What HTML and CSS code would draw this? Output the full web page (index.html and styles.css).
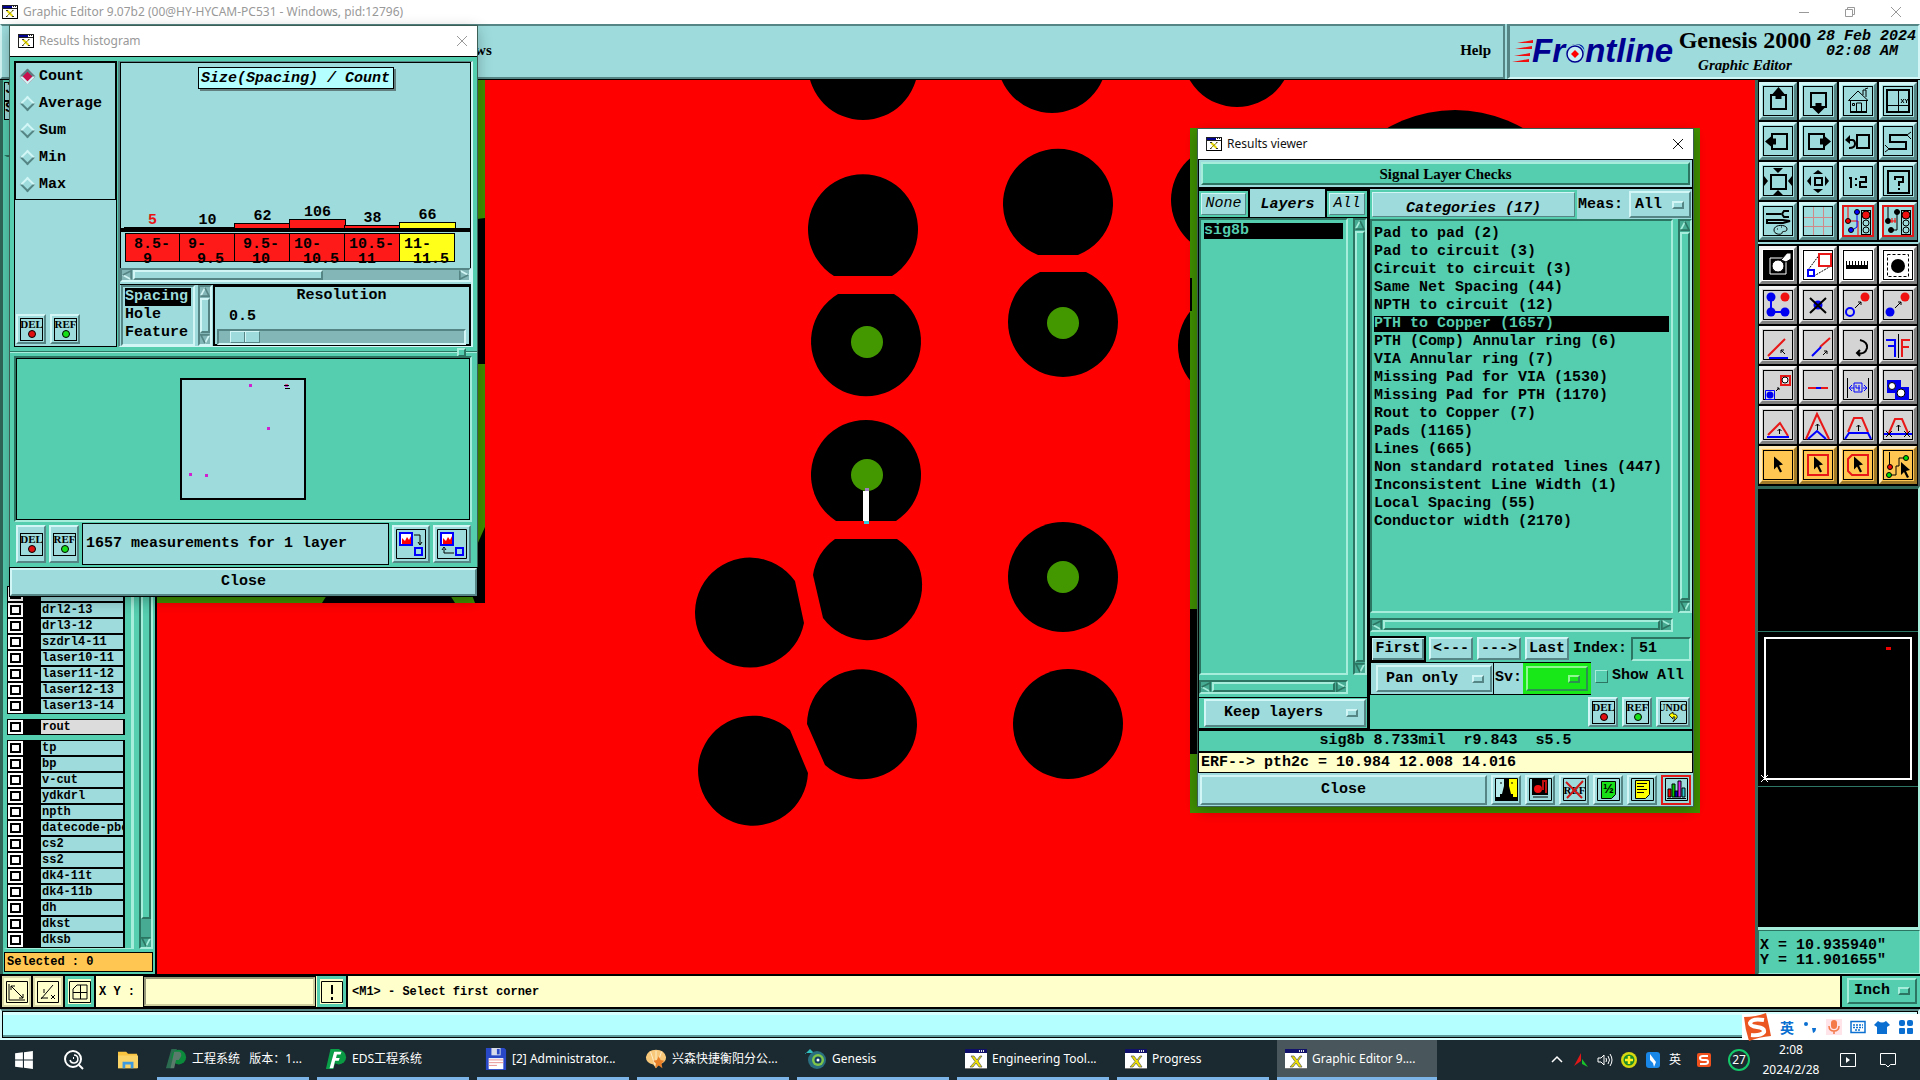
FILE: index.html
```html
<!DOCTYPE html>
<html lang="en">
<head>
<meta charset="utf-8">
<title>Graphic Editor 9.07b2</title>
<link rel="stylesheet" href="styles.css">
</head>
<body>
<svg class="defs" aria-hidden="true">
  <symbol id="xwin" viewBox="0 0 16 14"><rect x=".5" y=".5" width="15" height="13" fill="#fff" stroke="#222"/><path d="M1 1h9v2H1z" fill="#000090"/><path d="M11 1.5h1m1 0h1M1 3.500h14" stroke="#222"/><path d="M15.500 1v13M1 13.500h15" stroke="#000"/><path d="M5 5.500l5.500 5.500" stroke="#e6d800" stroke-width="2"/><path d="M4 5.500h2M10 11.500h2M4 11.500h1.500M10 5.500h1.500" stroke="#333"/><path d="M11 5.500L5 11" stroke="#8a8200"/></symbol>
  <symbol id="xtask" viewBox="0 0 22 22"><rect x="0" y="1" width="22" height="20" fill="#fff"/><path d="M0 1h22v4H0z" fill="#10106a"/><path d="M14 3h1m1 0h1m1 0h1" stroke="#ddd" stroke-width="2"/><path d="M6 8h3l3 4 3-4h2l-4 5 4 6h-3l-3-4-3 4H5l5-5.500z" fill="#f2e400" stroke="#555" stroke-width=".7"/><path d="M0 20.500h22" stroke="#777"/></symbol>
  <symbol id="del" viewBox="0 0 23 23"><rect x=".5" y=".5" width="22" height="22" fill="none" stroke="#000"/><text x="11.500" y="10" text-anchor="middle" font-family="Liberation Serif,serif" font-size="11">DEL</text><circle cx="12" cy="16" r="3.500" fill="#e01010" stroke="#000"/></symbol>
  <symbol id="ref" viewBox="0 0 23 23"><rect x=".5" y=".5" width="22" height="22" fill="none" stroke="#000"/><text x="11.500" y="10" text-anchor="middle" font-family="Liberation Serif,serif" font-size="11">REF</text><circle cx="12" cy="16" r="3.500" fill="#18e018" stroke="#000"/></symbol>
  <symbol id="arrow" viewBox="0 0 12 12"><path d="M6 1L1 10.500" stroke="var(--hi)" stroke-width="2"/><path d="M6 1L11 11H.5" fill="none" stroke="var(--lo)" stroke-width="2"/></symbol>
  <symbol id="cursor" viewBox="0 0 12 16"><path d="M1 0L10 8 6 9 9 15 7 16 4 10 1 13z"/></symbol>
</svg>

<div class="desktop">
  <header class="titlebar">
    <svg class="xicon"><use href="#xwin"/></svg>
    <span>Graphic Editor 9.07b2 (00@HY-HYCAM-PC531 - Windows, pid:12796)</span>
    <div class="winctl">
      <button aria-label="Minimize"><svg viewBox="0 0 12 12"><path d="M1 6.500h10"/></svg></button>
      <button aria-label="Restore"><svg viewBox="0 0 12 12"><path d="M1.500 3.500h7v7h-7zM3.500 3.500v-2h7v7h-2"/></svg></button>
      <button aria-label="Close"><svg viewBox="0 0 12 12"><path d="M1 1l10 10M11 1L1 11"/></svg></button>
    </div>
  </header>

  <div class="topbar aqua">
    <nav class="menubar"><a href="#w">Windows</a><a href="#h">Help</a></nav>
    <div class="brand">
      <svg class="logo" viewBox="0 0 162 28">
        <text x="20" y="24" font-family="Liberation Sans,sans-serif" font-size="33" font-weight="bold" font-style="italic" fill="#000090">Frontline</text>
        <circle cx="63" cy="16" r="10" fill="#9ddbdc"/><circle cx="63" cy="16" r="8" fill="#c8f0f4" stroke="#000090" stroke-width="1.500"/><path d="M63 12l4 4-4 4-4-4z" fill="#f00"/>
        <path d="M21 2v3H5zM20 8v3H3zM18 15v3H2zM17 21v3H0z" fill="#f01010"/>
      </svg>
      <div class="product"><b>Genesis 2000</b><i>Graphic Editor</i></div>
      <div class="date">28 Feb 2024<br>02:08 AM&nbsp;&nbsp;</div>
    </div>
  </div>

  <main class="work">
    <aside class="layers teal">
      <div class="jobs"><span>Job</span><span>Step</span></div>
      <div class="layerpane">
        <div class="layerlist">
          <div class="grp">
            <label><input type="checkbox"><span>laser4-5</span></label>
            <label><input type="checkbox"><span>drl2-13</span></label>
            <label><input type="checkbox"><span>drl3-12</span></label>
            <label><input type="checkbox"><span>szdrl4-11</span></label>
            <label><input type="checkbox"><span>laser10-11</span></label>
            <label><input type="checkbox"><span>laser11-12</span></label>
            <label><input type="checkbox"><span>laser12-13</span></label>
            <label><input type="checkbox"><span>laser13-14</span></label>
          </div>
          <div class="grp rout"><label><input type="checkbox"><span>rout</span></label></div>
          <div class="grp">
            <label><input type="checkbox"><span>tp</span></label>
            <label><input type="checkbox"><span>bp</span></label>
            <label><input type="checkbox"><span>v-cut</span></label>
            <label><input type="checkbox"><span>ydkdrl</span></label>
            <label><input type="checkbox"><span>npth</span></label>
            <label><input type="checkbox"><span>datecode-pbc</span></label>
            <label><input type="checkbox"><span>cs2</span></label>
            <label><input type="checkbox"><span>ss2</span></label>
            <label><input type="checkbox"><span>dk4-11t</span></label>
            <label><input type="checkbox"><span>dk4-11b</span></label>
            <label><input type="checkbox"><span>dh</span></label>
            <label><input type="checkbox"><span>dkst</span></label>
            <label><input type="checkbox"><span>dksb</span></label>
          </div>
        </div>
        <div class="vsb long"><svg><use href="#arrow"/></svg><i></i><svg class="down"><use href="#arrow"/></svg></div>
      </div>
      <div class="selected">Selected : 0</div>
    </aside>

    <section class="canvas" aria-label="Board view">
      <svg width="100%" height="100%">
        <g transform="translate(-157 -80)">
          <path d="M157 80H485V603H157z" fill="#3f8f00"/>
          <path d="M477 219l8-1V364h-8zM485 527V603H475l-3-8 5-50zM327 595H450l5 8H322z"/>
          <circle cx="863" cy="65" r="55"/><circle cx="1052" cy="58" r="55"/><circle cx="1237" cy="52" r="55"/><circle cx="1455" cy="247" r="137"/>
          <path d="M834 276A55 55 0 1 1 892 276z"/>
          <path d="M838 294A55 55 0 1 0 894 294z"/>
          <path d="M836 521A55 55 0 1 1 896 521z"/>
          <path d="M835 539A55 55 0 0 0 813 575L823 618A55 55 0 1 0 897 539z"/>
          <path d="M795 581A55 55 0 1 0 804 623z"/>
          <path d="M807 724L825 765A55 55 0 1 0 807 724z"/>
          <path d="M790 730A55 55 0 1 0 808 773z"/>
          <path d="M1038 255A55 55 0 1 1 1078 255z"/>
          <path d="M1040 272A55 55 0 1 0 1086 272z"/>
          <circle cx="1063" cy="577" r="55"/><circle cx="1068" cy="724" r="55"/><circle cx="1226" cy="200" r="55"/><circle cx="1233" cy="346" r="55"/>
          <g fill="#439800"><circle cx="867" cy="342" r="16"/><circle cx="867" cy="475" r="16"/><circle cx="1063" cy="323" r="16"/><circle cx="1063" cy="577" r="16"/></g>
          <path d="M863 491h6v30h-6z" fill="#fff"/><path d="M864 521h5v3h-5z" fill="#30d0e0"/><path d="M865 488h4v3h-4z" fill="#a080c0"/>
          <path d="M1190 128H1700V813H1190z" fill="#3f8f00"/><path d="M1190 609h8v145h-8zM1190 278h2v33h-2z"/>
        </g>
      </svg>
    </section>

    <aside class="tools">
      <div class="grid aqua">
        <button><svg viewBox="0 0 30 30"><rect x=".5" y=".5" width="29" height="29"/><path class="w2" d="M8 9h15v14H8z"/><path class="k" d="M15.500 1l6 7h-3v5h-6V8h-3z"/></svg></button>
        <button><svg viewBox="0 0 30 30"><rect x=".5" y=".5" width="29" height="29"/><path class="w2" d="M8 7h15v14H8z"/><path class="k" d="M15.500 28l6-6h-3v-5h-6v5h-3z"/></svg></button>
        <button><svg viewBox="0 0 30 30"><rect x=".5" y=".5" width="29" height="29"/><path d="M5.500 14.500L15 5l10 9.500zM7.500 14.500v12h16v-12M13.500 26v-9h5v9M20 9V4h3v7M22 3l3-1M9.500 17.500h2v2h-2z"/><path d="M7 26h17" class="w2"/></svg></button>
        <button><svg viewBox="0 0 30 30"><rect x=".5" y=".5" width="29" height="29"/><path class="w2" d="M4 4h22v22H4z"/><path d="M15.500 4v22M4 19.500h22M18 13l3 4m0-4l-3 4M22 13l1.500 2 1.500-2m-1.500 2v2"/></svg></button>
        <button><svg viewBox="0 0 30 30"><rect x=".5" y=".5" width="29" height="29"/><path class="w2" d="M9 8h15v15H9z"/><path class="k" d="M2 15.500l6-5v2h5v6H8v2z"/></svg></button>
        <button><svg viewBox="0 0 30 30"><rect x=".5" y=".5" width="29" height="29"/><path class="w2" d="M6 8h15v15H6z"/><path class="k" d="M28 15.500l-6-5v2h-5v6h5v2z"/></svg></button>
        <button><svg viewBox="0 0 30 30"><rect x=".5" y=".5" width="29" height="29"/><path class="w2" d="M14 9h12v13H14zM4 14h5q3 0 3 4t-6 4"/><path class="k" d="M2 14l5-5v9z"/></svg></button>
        <button><svg viewBox="0 0 30 30"><rect x=".5" y=".5" width="29" height="29"/><path class="w2" d="M24 9H7v7h16v7H6"/><path d="M24 9l4-3m-4 3l4 4M6 23l-4-4m4 4l-4 3"/></svg></button>
        <button><svg viewBox="0 0 30 30"><rect x=".5" y=".5" width="29" height="29"/><path class="w2" d="M8 9h15v14H8z"/><path class="k" d="M10 2h10l-5 5zM10 29h10l-5-5zM1 10v10l4-5zM29 10v10l-4-5z"/></svg></button>
        <button><svg viewBox="0 0 30 30"><rect x=".5" y=".5" width="29" height="29"/><path class="w2" d="M12 12h7v7h-7z"/><path class="k" d="M10 8h10l-5-4zM10 23h10l-5 4zM8 10v10l-4-5zM22 10v10l4-5z"/></svg></button>
        <button><svg viewBox="0 0 30 30"><rect x=".5" y=".5" width="29" height="29"/><path class="w2" d="M6 12h2v10M13 12v2m0 4v2M17 11h6v5h-6v5h7"/></svg></button>
        <button><svg viewBox="0 0 30 30"><rect x=".5" y=".5" width="29" height="29"/><path class="w2" d="M5 5h21v22H5zM12 14v-3h8v5h-4v4m0 2v2"/></svg></button>
        <button><svg viewBox="0 0 30 30"><rect x=".5" y=".5" width="29" height="29"/><path class="w2" d="M3 8h15m8-3h-5l-2 3 2 3h5M4 14h16l7 1-7 2H4z"/><path d="M11 24c0-6 13-6 13-1 0 4-5 1-5 4 0 2-8 2-8-3zM14 23h1m3-2h1"/></svg></button>
        <button><svg viewBox="0 0 30 30"><rect x=".5" y=".5" width="29" height="29"/><path d="M10.500 1v28M20.500 1v28M1 11.500h28M1 20.500h28" stroke="#d08888"/></svg></button>
        <button class="hot"><svg viewBox="0 0 30 30"><path d="M5 1v14h10v14" stroke="#f00"/><path d="M14 7v14l-6 4" stroke="#00f"/><circle cx="14" cy="6" r="2.500" fill="#00f"/><circle cx="8" cy="24" r="2.500" fill="#00f"/><circle cx="5" cy="15" r="2.500" fill="#e00"/><rect x="18.500" y="4.500" width="9" height="24"/><circle class="rd" cx="23" cy="9" r="4"/><circle cx="23" cy="17" r="3"/><circle cx="23" cy="24" r="3"/></svg></button>
        <button class="hot"><svg viewBox="0 0 30 30"><path d="M5 1v14M14 7v17H8"/><circle cx="14" cy="6" r="2.500" fill="#000"/><circle cx="8" cy="24" r="2.500" fill="#000"/><circle cx="5" cy="15" r="2.500" fill="#000"/><path d="M7 15h6m-4-3v5m3-5v5" stroke="#f00"/><rect x="18.500" y="4.500" width="9" height="24"/><circle class="rd" cx="23" cy="9" r="4"/><circle cx="23" cy="17" r="3"/><circle cx="23" cy="24" r="3"/></svg></button>
      </div>
      <div class="grid lower">
        <button class="wh"><svg viewBox="0 0 30 30"><path class="k" d="M0 0h30v30H0z"/><path d="M7 8h16v16H7z" stroke="#fff"/><circle cx="15" cy="16" r="6" fill="#fff"/><path d="M18 10L24 3h4v6l-5 3z" fill="#fff"/></svg></button>
        <button class="wh"><svg viewBox="0 0 30 30"><rect x=".5" y=".5" width="29" height="29"/><path d="M17 4L5 20M28 16L11 26" stroke-dasharray="2 1"/><path class="r" d="M16 4h12v12H16z"/><path class="b" d="M5 20h6v6H5z"/></svg></button>
        <button class="wh"><svg viewBox="0 0 30 30"><rect x=".5" y=".5" width="29" height="29"/><path class="k" d="M3 11h1v4h2v-4h1v4h2v-4h1v4h2v-4h1v4h2v-4h1v4h2v-4h1v4h2v-4h1v4h2v-4h1v8H3z"/></svg></button>
        <button class="wh"><svg viewBox="0 0 30 30"><rect x=".5" y=".5" width="29" height="29"/><path d="M4.500 4.500h21v22h-21z" stroke-dasharray="3 2"/><circle class="k" cx="15" cy="16" r="7"/></svg></button>

        <button><svg viewBox="0 0 30 30"><rect x=".5" y=".5" width="29" height="29"/><path class="b" d="M8 7v15h14"/><circle class="bf" cx="8" cy="7" r="4.500"/><circle class="bf" cx="8" cy="22" r="4.500"/><circle class="bf" cx="22" cy="22" r="4.500"/><circle class="rf" cx="22" cy="7" r="4.500"/></svg></button>
        <button><svg viewBox="0 0 30 30"><rect x=".5" y=".5" width="29" height="29"/><circle class="bf" cx="15" cy="15" r="4.500"/><path class="w2" d="M7 8l16 15M23 8L7 23"/></svg></button>
        <button><svg viewBox="0 0 30 30"><rect x=".5" y=".5" width="29" height="29"/><circle class="rf" cx="22" cy="7" r="4.500"/><circle class="b" cx="7" cy="22" r="4"/><path d="M12 18l6-6h-3m3 0v3"/></svg></button>
        <button><svg viewBox="0 0 30 30"><rect x=".5" y=".5" width="29" height="29"/><circle class="rf" cx="22" cy="7" r="4.500"/><circle class="bf" cx="7" cy="22" r="4.500"/><path d="M12 18l6-6h-3m3 0v3"/></svg></button>

        <button><svg viewBox="0 0 30 30"><rect x=".5" y=".5" width="29" height="29"/><path class="r" d="M5 26L22 9"/><path class="b" d="M6 28h19"/><path d="M22 24l-4-4h3m-3 0v3"/></svg></button>
        <button><svg viewBox="0 0 30 30"><rect x=".5" y=".5" width="29" height="29"/><path class="r" d="M17 17l10-9"/><path class="b" d="M9 26l9-9"/><path d="M20 25l4-4h-3m3 0v3"/></svg></button>
        <button><svg viewBox="0 0 30 30"><rect x=".5" y=".5" width="29" height="29"/><path class="w2" d="M17 10q8 2 7 8-2 7-9 5m2-3l-3 3 3 3"/></svg></button>
        <button><svg viewBox="0 0 30 30"><rect x=".5" y=".5" width="29" height="29"/><path class="b" d="M3 10h9v17M5 16h7"/><path class="r" d="M27 10h-8v17M19 17h7"/><path d="M15.500 4v24"/></svg></button>

        <button><svg viewBox="0 0 30 30"><rect x=".5" y=".5" width="29" height="29"/><path class="r" d="M18 6h9v9h-9z"/><circle cx="22" cy="10" r="3" fill="#fff"/><path d="M2.500 20.500h9v9h-9z" stroke="#00f"/><circle class="bf" cx="7" cy="25" r="3.500"/><path d="M13 21l3-3m-2 0h2v2"/></svg></button>
        <button><svg viewBox="0 0 30 30"><rect x=".5" y=".5" width="29" height="29"/><path class="r" d="M5 18h20"/><path class="b" d="M13 18h5"/></svg></button>
        <button><svg viewBox="0 0 30 30"><rect x=".5" y=".5" width="29" height="29"/><path d="M4.500 8v20M25.500 8v20"/><path d="M6 18h5m9 0h4M9 15l-3 3 3 3M21 15l3 3-3 3M11 13h8v9h-8zM13 15v3h4m-1-3v6" stroke="#00f"/></svg></button>
        <button><svg viewBox="0 0 30 30"><rect x=".5" y=".5" width="29" height="29"/><path class="bf" d="M4 10h14v7h8v13H12v-7H4z"/><circle cx="9" cy="16" r="3.500" fill="#fff"/><circle cx="18" cy="23" r="4" fill="#fff"/></svg></button>

        <button><svg viewBox="0 0 30 30"><rect x=".5" y=".5" width="29" height="29"/><path class="r" d="M5 25l12-12 8 13"/><path class="b" d="M4 27h22"/><path d="M16.500 24v-5m-2 2l2-2 2 2"/></svg></button>
        <button><svg viewBox="0 0 30 30"><rect x=".5" y=".5" width="29" height="29"/><path class="r" d="M3 29L14 4l12 25"/><path class="b" d="M5 29l9-8 9 8"/><path d="M14.500 20v-6m-2 2l2-2 2 2"/></svg></button>
        <button><svg viewBox="0 0 30 30"><rect x=".5" y=".5" width="29" height="29"/><path class="r" d="M5 22l6-14h8l6 14"/><path class="b" d="M2 29l4-6h19l3 6"/><path d="M15.500 21v-6m-2 2l2-2 2 2"/></svg></button>
        <button><svg viewBox="0 0 30 30"><rect x=".5" y=".5" width="29" height="29"/><path class="r" d="M6 23l6-14h7l6 14"/><path class="b" d="M1 24h28"/><path d="M15.500 21v-6m-2 2l2-2 2 2M3 21l6 6m0-6l-6 6M21 21l6 6m0-6l-6 6"/></svg></button>

        <button class="or"><svg viewBox="0 0 30 30"><rect x=".5" y=".5" width="29" height="29"/><use href="#cursor" x="10" y="6" width="12" height="17"/></svg></button>
        <button class="or"><svg viewBox="0 0 30 30"><rect x=".5" y=".5" width="29" height="29"/><path class="r" d="M5 5h20v20H5z"/><use href="#cursor" x="10" y="6" width="12" height="17"/></svg></button>
        <button class="or"><svg viewBox="0 0 30 30"><rect x=".5" y=".5" width="29" height="29"/><path class="r" d="M9 5h16v20H9l-4-4V9z"/><use href="#cursor" x="10" y="6" width="12" height="17"/></svg></button>
        <button class="or"><svg viewBox="0 0 30 30"><rect x=".5" y=".5" width="29" height="29"/><path d="M6.500 2v14M6 25h7v-9h3V8h7"/><circle cx="7" cy="17" r="2.500" fill="#e00"/><circle cx="6" cy="25" r="2.500" fill="#0d0"/><circle cx="23" cy="8" r="2.500" fill="#0d0"/><use href="#cursor" x="17" y="12" width="12" height="16"/></svg></button>
      </div>
      <div class="overview">
        <div></div>
        <div class="mid"><svg width="100%" height="100%"><rect x="7" y="6" width="146" height="141" fill="none" stroke="#fff" stroke-width="2"/><path d="M128 15h5v3h-5z" fill="#e00"/><path d="M3 143l7 7m0-7l-7 7" stroke="#fff"/></svg></div>
        <div></div>
      </div>
      <div class="coords">X = 10.935940"<br>Y = 11.901655"</div>
    </aside>
  </main>

  <div class="command">
    <button class="cb" aria-label="Zoom window"><svg viewBox="0 0 22 22"><path d="M.5.500h21v21H.5zM5 5l12 12M5 9V5h4m8 8v4h-4M3 3v16h16"/></svg></button>
    <button class="cb" aria-label="Angle"><svg viewBox="0 0 22 22"><path d="M.5.500h21v21H.5zM4 18L16 4M4 17h7m3-3l4 4m0-4l-4 4M7 8v4"/></svg></button>
    <button class="cb lit" aria-label="Grid"><svg viewBox="0 0 22 22"><path d="M.5.500h21v21H.5zM4 8l4-4h10v14H4zM11.500 4v14M4 11.500h14"/></svg></button>
    <label for="xy">X Y :</label>
    <input id="xy" type="text">
    <button class="cb lit" aria-label="Alert"><svg viewBox="0 0 22 22"><path d="M.5.500h21v21H.5z"/><path d="M11 4v9m0 3v3" stroke-width="2"/></svg></button>
    <p>&lt;M1&gt; - Select first corner</p>
    <div class="unit teal"><span class="sel"><select aria-label="Unit"><option>Inch</option></select></span></div>
  </div>
  <div class="strip"><div></div></div>

  <footer class="taskbar">
    <button class="tb" aria-label="Start"><svg viewBox="0 0 18 18"><path d="M1 3l7-1v6.500H1zM9 2l8-1v7.500H9zM1 9.500h7V16l-7-1zM9 9.500h8V17l-8-1z" fill="#fff"/></svg></button>
    <button class="tb" aria-label="Search"><svg viewBox="0 0 20 20" fill="none" stroke="#fff" stroke-width="2"><circle cx="9" cy="9" r="8"/><path d="M15 15l4 4"/><path d="M10 5a4 4 0 1 1-4 5" stroke-width="1.500"/><path d="M9 8h1" /></svg></button>
    <button class="tb files" aria-label="Files"><svg viewBox="0 0 22 20"><path d="M0 1h9l2 2h10v16H0z" fill="#f9c440"/><path d="M0 5h22v14H0z" fill="#fbd468"/><path d="M5 19v-7h12v7h-3v-4H8v4z" fill="#3f9be0"/></svg></button>
    <a class="app" href="#1"><svg viewBox="0 0 22 24"><path d="M6 1h6L6 22H0z" fill="#2b6b4f"/><circle cx="14" cy="10" r="8" fill="#0b8a3c"/><path d="M9 4h6q4 3-1 9h-3l-2 9H5z" fill="#5a7a6c"/></svg>工程系统&nbsp;&nbsp; 版本：1...</a>
    <a class="app" href="#2"><svg viewBox="0 0 22 24"><path d="M5 1h10L8 23H0z" fill="#0aa049"/><circle cx="14" cy="10" r="8" fill="#0b9a44"/><path d="M9 4h8l-1 3h-4l-1 4h4l-1 3h-4l-2 8H4z" fill="#fff"/></svg>EDS工程系统</a>
    <a class="app" href="#3"><svg viewBox="0 0 22 24"><path d="M0 0h20l2 2v22H0z" fill="#2848c8"/><path d="M6 0h10v8H6z" fill="#d8dcea"/><path d="M12 1h3v6h-3z" fill="#2848c8"/><path d="M3 11h16v12H3z" fill="#fff"/><path d="M3 13h16M3 16h16M3 19h9" stroke="#e68a8a"/></svg>[2] Administrator...</a>
    <a class="app" href="#4"><svg viewBox="0 0 24 22"><path d="M1 9Q3 1 12 1t11 8q0 6-8 8l-3 4-3-4Q1 15 1 9z" fill="#f8c87a"/><path d="M12 2v18M6 3l5 15M18 3l-5 15" stroke="#fff0cf"/><path d="M15 8l2 4 4 1-3 3 1 5-4-3-4 3 1-5-3-3 4-1z" fill="#e8802a"/></svg>兴森快捷衡阳分公...</a>
    <a class="app" href="#5"><svg viewBox="0 0 22 22"><path d="M0 6l5-5 4 4h-9z" fill="#30c0c0"/><circle cx="12" cy="12" r="9" fill="#2a6f7f"/><circle cx="13" cy="12" r="6" fill="#7fc54a"/><circle cx="13" cy="12" r="3.500" fill="#123c60"/><circle cx="13" cy="12" r="1.500" fill="#fff"/></svg>Genesis</a>
    <a class="app" href="#6"><svg><use href="#xtask"/></svg>Engineering Tool...</a>
    <a class="app" href="#7"><svg><use href="#xtask"/></svg>Progress</a>
    <a class="app active" href="#8"><svg><use href="#xtask"/></svg>Graphic Editor 9....</a>
    <div class="tray">
      <svg viewBox="0 0 16 16"><path d="M3 10l5-5 5 5" fill="none" stroke="#fff" stroke-width="1.500"/></svg>
      <svg viewBox="0 0 16 16"><path d="M8 1v8l-7 5z" fill="#e01818"/><path d="M9 7l6 8-6-3z" fill="#19c22a"/></svg>
      <svg viewBox="0 0 16 16" fill="none" stroke="#fff"><path d="M1 6h3l3-3v10l-3-3H1zM9 6q1 2 0 4M11 4q3 4 0 8M13 2q4 6 0 12"/></svg>
      <svg viewBox="0 0 16 16"><circle cx="8" cy="8" r="8" fill="#d8d810"/><circle cx="8" cy="8" r="5.500" fill="#1d8c28"/><path d="M8 4v8M4 8h8" stroke="#fff020" stroke-width="2.500"/></svg>
      <svg viewBox="0 0 16 16"><rect x="1" width="14" height="16" rx="3" fill="#1887e8"/><path d="M5 2l6 8-2 5-1-4-3-3z" fill="#fff"/></svg>
      <span>英</span>
      <svg class="sogou" viewBox="0 0 16 16"><rect x="1" y="1" width="14" height="14" rx="2" fill="#f0501c"/><path d="M12 4H7q-3 0-3 2t3 2h3q2 0 2 2t-3 2H4" fill="none" stroke="#fff" stroke-width="2"/></svg>
      <b class="badge">27</b>
      <div class="clock">2:08<br>2024/2/28</div>
      <svg class="play" viewBox="0 0 16 16"><path d="M.5 1.500h15v13H.5z" fill="none" stroke="#fff"/><path d="M6 5l4 3-4 3z" fill="#fff"/></svg>
      <svg class="note" viewBox="0 0 16 16"><path d="M.5 1.500h15v11h-5l-2.500 2.500-2.500-2.500h-5z" fill="none" stroke="#fff"/></svg>
    </div>
  </footer>

  <div class="ime">
    <svg class="s" viewBox="0 0 30 30"><path d="M2 5q12 0 22-4 3 12 5 23-12 1-22 5Q3 17 2 5z" fill="#ea5520"/><path d="M22 8Q10 6 8 11q0 3 7 4 8 1 7 5-3 4-13 3" fill="none" stroke="#fff" stroke-width="4"/></svg>
    <span>英</span>
    <svg viewBox="0 0 16 16"><circle cx="4" cy="5" r="2" fill="#0a6fd0"/><path d="M10 9h4q0 4-3 5" fill="#0a6fd0"/></svg>
    <svg class="mic" viewBox="0 0 16 16"><rect x="5" y="1" width="6" height="9" rx="3" fill="#f47a4a"/><path d="M3 7q0 5 5 5t5-5M8 12v3" fill="none" stroke="#f47a4a" stroke-width="1.500"/></svg>
    <svg viewBox="0 0 16 16"><rect x="1" y="2.500" width="14" height="11" fill="none" stroke="#0a6fd0" stroke-width="1.500"/><path d="M3 6h10M3 8.500h10M5 11h6" stroke="#0a6fd0" stroke-width="1.500" stroke-dasharray="2 1"/></svg>
    <svg viewBox="0 0 16 16"><path d="M4 2q4 3 8 0l4 4-3 2v7H3V8L0 6z" fill="#0a6fd0"/></svg>
    <svg viewBox="0 0 16 16" fill="#0a6fd0"><rect x="1" y="1" width="6" height="6" rx="2"/><rect x="9" y="1" width="6" height="6" rx="2"/><rect x="1" y="9" width="6" height="6" rx="1"/><rect x="9" y="9" width="6" height="6" rx="1"/></svg>
  </div>

  <!-- Results histogram window -->
  <section class="win hist teal" aria-label="Results histogram">
    <header><svg class="xicon"><use href="#xwin"/></svg><span>Results histogram</span><button aria-label="Close"><svg viewBox="0 0 12 12"><path d="M1 1l10 10M11 1L1 11"/></svg></button></header>
    <div class="upper">
      <div class="stat aqua">
        <fieldset>
          <label><input type="radio" name="stat" checked>Count</label>
          <label><input type="radio" name="stat">Average</label>
          <label><input type="radio" name="stat">Sum</label>
          <label><input type="radio" name="stat">Min</label>
          <label><input type="radio" name="stat">Max</label>
        </fieldset>
        <div class="mini"><button class="ib" aria-label="Delete"><svg><use href="#del"/></svg></button><button class="ib" aria-label="Reference"><svg><use href="#ref"/></svg></button></div>
      </div>
      <div class="chartpane aqua">
        <div class="chart">
          <h2>Size(Spacing) / Count</h2>
          <div class="bars">
            <div class="red">5<i style="height:0"></i></div><div>10<i style="height:0"></i></div><div>62<i style="height:4px"></i></div><div>106<i style="height:8px"></i></div><div>38<i style="height:2px"></i></div><div class="y">66<i style="height:5px"></i></div>
          </div>
          <div class="cells"><div class="in">8.5-<br>&nbsp;9</div><div class="in">9-<br>&nbsp;9.5</div><div class="in">9.5-<br>&nbsp;10</div><div>10-<br>&nbsp;10.5</div><div>10.5-<br>&nbsp;11</div><div class="y">11-<br>&nbsp;11.5</div></div>
        </div>
        <div class="hsb part"><svg class="left"><use href="#arrow"/></svg><i></i><s></s><svg class="right"><use href="#arrow"/></svg></div>
        <div class="resrow">
          <ul><li class="on">Spacing</li><li>Hole</li><li>Feature</li></ul>
          <div class="vsb"><svg><use href="#arrow"/></svg><i></i><svg class="down"><use href="#arrow"/></svg></div>
          <div class="res"><label for="rs">Resolution</label><output>0.5</output><input id="rs" type="range" min="0" max="100" value="5"></div>
        </div>
      </div>
    </div>
    <div class="sash"><i></i></div>
    <div class="map"><svg viewBox="0 0 126 122"><rect x="1" y="1" width="124" height="120" fill="#9ddbdc" stroke="#000" stroke-width="2"/><path d="M69 6h3v3h-3zM105 6h3v3h-3zM87 49h3v3h-3zM9 95h3v3H9zM25 96h3v3h-3z" fill="#d020d0"/><path d="M104 7.500h5M105 10.500h5" stroke="#000"/><path d="M105 6.500h3" stroke="#d06090"/></svg></div>
    <div class="info aqua">
      <button class="ib" aria-label="Delete"><svg><use href="#del"/></svg></button><button class="ib" aria-label="Reference"><svg><use href="#ref"/></svg></button>
      <p>1657 measurements for 1 layer</p>
      <button class="ib big" aria-label="Copy to layer"><svg viewBox="0 0 30 30"><path d="M.5.500h29v29H.5z" fill="none" stroke="#000"/><path d="M4 4h12v12H4z" fill="#fff" stroke="#00f" stroke-width="2"/><path d="M6 15V9l3 3 2-4 2 3 2-4v8z" fill="#f00"/><path d="M19 19h7v7h-7z" fill="none" stroke="#00f" stroke-width="2"/><path d="M18 6h6v9m-2-2l2 3 2-3" fill="none" stroke="#000"/></svg></button>
      <button class="ib big" aria-label="Copy from layer"><svg viewBox="0 0 30 30"><path d="M.5.500h29v29H.5z" fill="none" stroke="#000"/><path d="M4 4h12v12H4z" fill="#fff" stroke="#00f" stroke-width="2"/><path d="M6 15V9l3 3 2-4 2 3 2-4v8z" fill="#f00"/><path d="M19 19h7v7h-7z" fill="none" stroke="#00f" stroke-width="2"/><path d="M17 24H7v-4m-2 1l2-3 2 3" fill="none" stroke="#000"/></svg></button>
    </div>
    <button class="close aqua">Close</button>
  </section>

  <!-- Results viewer window -->
  <section class="win viewer teal" aria-label="Results viewer">
    <header><svg class="xicon"><use href="#xwin"/></svg><span>Results viewer</span><button aria-label="Close"><svg viewBox="0 0 12 12"><path d="M1 1l10 10M11 1L1 11"/></svg></button></header>
    <div class="check"><h2>Signal Layer Checks</h2></div>
    <div class="panes">
      <div class="lcol">
        <div class="lhead aqua"><button>None</button><b>Layers</b><button>All</button></div>
        <div class="lists"><ul><li class="on">sig8b</li></ul><div class="vsb"><svg><use href="#arrow"/></svg><i></i><svg class="down"><use href="#arrow"/></svg></div></div>
        <div class="hsb"><svg class="left"><use href="#arrow"/></svg><i></i><svg class="right"><use href="#arrow"/></svg></div>
        <div class="keep aqua"><span class="sel"><select aria-label="Layer mode"><option>Keep layers</option></select></span></div>
      </div>
      <div class="rcol">
        <div class="rhead aqua"><button>Categories (17)</button><label for="meas">Meas:</label><span class="sel"><select id="meas"><option>All</option></select></span></div>
        <div class="lists"><ul>
          <li>Pad to pad (2)</li><li>Pad to circuit (3)</li><li>Circuit to circuit (3)</li><li>Same Net Spacing (44)</li><li>NPTH to circuit (12)</li><li class="on">PTH to Copper (1657)</li><li>PTH (Comp) Annular ring (6)</li><li>VIA Annular ring (7)</li><li>Missing Pad for VIA (1530)</li><li>Missing Pad for PTH (1170)</li><li>Rout to Copper (7)</li><li>Pads (1165)</li><li>Lines (665)</li><li>Non standard rotated lines (447)</li><li>Inconsistent Line Width (1)</li><li>Local Spacing (55)</li><li>Conductor width (2170)</li>
        </ul><div class="vsb"><svg><use href="#arrow"/></svg><i></i><svg class="down"><use href="#arrow"/></svg></div></div>
        <div class="hsb"><svg class="left"><use href="#arrow"/></svg><i></i><svg class="right"><use href="#arrow"/></svg></div>
        <div class="navrow aqua"><button class="def">First</button><button>&lt;---</button><button>---&gt;</button><button>Last</button><label for="idx">Index:</label><input id="idx" type="text" value="51"></div>
        <div class="panrow aqua"><div class="pan"><span class="sel"><select aria-label="Pan mode"><option>Pan only</option></select></span><label for="sv">Sv:</label><span class="sel green"><select id="sv"><option></option></select></span></div><label class="show"><input type="checkbox">Show All</label></div>
        <div class="mini aqua"><button class="ib" aria-label="Delete"><svg><use href="#del"/></svg></button><button class="ib" aria-label="Reference"><svg><use href="#ref"/></svg></button><button class="ib undo" aria-label="Undo"><svg viewBox="0 0 27 23"><path d="M.5.500h26v22H.5z" fill="none" stroke="#000"/><text x="13" y="10" text-anchor="middle" font-family="Liberation Serif,serif" font-size="10">UNDO</text><path d="M9 14l4-3v2q5 0 4 4l-4 4 2-4q0-2-2-1v2z" fill="#ff0" stroke="#000" stroke-width=".8"/></svg></button></div>
      </div>
    </div>
    <p class="meas">sig8b 8.733mil  r9.843  s5.5</p>
    <p class="erf">ERF--&gt; pth2c = 10.984 12.008 14.016</p>
    <div class="foot aqua"><button class="cl">Close</button>
      <button class="ib" aria-label="Faces"><svg viewBox="0 0 23 23"><path d="M0 0h10v23H0z" fill="#b8ecec"/><path d="M12 0h11v23H12z" fill="#ff0"/><path d="M9 0h5v8l2 8h2v3h5v4H0v-4h5v-3h2l2-8z"/><path d="M6 4v2M17 4v2" stroke="#000"/><path d="M.5.500h22v22H.5z" fill="none" stroke="#000"/></svg></button>
      <button class="ib" aria-label="Stop"><svg viewBox="0 0 23 23"><path d="M.5.500h22v22H.5z" fill="none" stroke="#000"/><path d="M3 1h16v16H3z"/><circle cx="9" cy="11" r="4" fill="#f01010"/><path d="M11 11h3V3h3v12" fill="none" stroke="#c01010" stroke-width="2"/><path d="M4 19h15" stroke="#000"/></svg></button>
      <button class="ib" aria-label="No reference"><svg viewBox="0 0 23 23"><path d="M.5.500h22v22H.5z" fill="none" stroke="#000"/><text x="11.500" y="16" text-anchor="middle" font-family="Liberation Serif,serif" font-size="11">REF</text><path d="M3 4l16 16M20 3L4 20" stroke="#d01818" stroke-width="2"/></svg></button>
      <button class="ib" aria-label="Half"><svg viewBox="0 0 23 23"><path d="M.5.500h22v22H.5z" fill="none" stroke="#000"/><path d="M4.500 3.500h14v13l-4 4h-10z" fill="#18e018" stroke="#000"/><text x="6" y="15" font-family="Liberation Sans,sans-serif" font-weight="bold" font-size="13">½</text></svg></button>
      <button class="ib" aria-label="Notes"><svg viewBox="0 0 23 23"><path d="M.5.500h22v22H.5z" fill="none" stroke="#000"/><path d="M4.500 2.500h14v14l-4 4h-10z" fill="#ff0" stroke="#000"/><path d="M6 5.500h10M6 8.500h7M6 11.500h10M6 14.500h7" stroke="#000"/></svg></button>
      <button class="ib hotb" aria-label="Histogram"><svg viewBox="0 0 23 23"><path d="M.5.500h22v22H.5z" fill="none" stroke="#000"/><path d="M3 11h3v8H3z" fill="#e00" stroke="#000"/><path d="M7 6h3v13H7z" fill="#0c0" stroke="#000"/><path d="M10 13h3v6h-3z" fill="#00c" stroke="#000"/><path d="M13 3h3v16h-3z" fill="#e020e0" stroke="#000"/><path d="M17 10h3v9h-3z" fill="#30c8d0" stroke="#000"/><path d="M2 20.500h19" stroke="#000"/></svg></button>
    </div>
  </section>
</div>
</body>
</html>
```
FILE: styles.css
```css
*,*::after{box-sizing:border-box}
body{margin:0;font:bold 15px/18px "Liberation Mono",monospace;color:#000;overflow:hidden}
button,input,select{font:inherit;color:inherit;margin:0;padding:0;border:0;border-radius:0;background:none}
h2,p,ul,fieldset{margin:0;padding:0;border:0;font-size:15px;list-style:none}
a{color:inherit;text-decoration:none}
.defs{position:absolute;width:0;height:0}
.aqua{--bg:#9ddbdc;--hi:#d2f6f5;--lo:#558584;--tr:#83b7b7}
.teal{--bg:#55cdaf;--hi:#a6eedb;--lo:#2b7562;--tr:#46ab92}
.desktop{position:relative;display:grid;grid-template-rows:24px 56px 1fr 35px 31px 40px;grid-template-columns:minmax(0,1fr);height:100vh;overflow:hidden}

/* title bars */
.titlebar,.win>header{display:flex;align-items:center;background:#fff;color:#999;font:12px/16px "Noto Sans","Noto Sans CJK SC",sans-serif}
.xicon{width:16px;height:14px;margin-right:5px}
.titlebar{padding:0 18px 0 2px}
.winctl{margin-left:auto;display:flex;gap:34px}
.winctl button,.win>header button{width:12px;height:12px}
.winctl svg,.win>header button svg{display:block;width:12px;height:12px;fill:none;stroke:currentColor}

/* menu and brand */
.topbar{display:flex;background:var(--bg);border-bottom:1px solid #000}
.menubar{flex:1;display:flex;justify-content:space-between;align-items:center;padding:0 12px 4px 430px;border:2px solid;border-color:var(--lo) var(--lo) var(--lo) var(--hi);font:bold 15px/18px "Liberation Serif",serif}
.brand{display:flex;align-items:center;flex:0 0 413px;padding-left:2px;border:solid;border-width:2px 2px 2px 3px;border-color:var(--lo) var(--hi) var(--hi) var(--lo);margin-left:2px;white-space:nowrap}
.logo{width:162px;height:28px;flex:none}
.product{display:flex;flex-direction:column;align-items:center;margin:0 0 2px 3px;width:136px;font-family:"Liberation Serif",serif}
.product b{font-size:24px;line-height:28px}
.product i{font-size:15px;line-height:22px}
.date{font-style:italic;line-height:15px;text-align:right;margin:0 0 16px 4px}

/* middle band */
.work{display:flex;min-height:0}
.layers{flex:0 0 157px;display:flex;flex-direction:column;background:var(--bg);border-left:3px solid #2f6658;border-right:2px solid #000;padding:2px 2px 2px 1px;font-size:12px;line-height:14px}
.jobs{height:73px;font-size:15px}
.jobs span{display:block;height:19px;border:1px solid #000;background:#9ddbdc}
.layerpane{flex:1;display:flex;min-height:0;justify-content:space-between}
.layerlist{width:130px;overflow:hidden;display:flex;flex-direction:column;justify-content:flex-end;gap:5px;border:solid;border-width:2px 3px 1px 3px;border-color:var(--lo) var(--hi) var(--hi) var(--bg);padding-right:6px}
.grp label{display:grid;grid-template-columns:16px 17px 1fr;height:16px;background:#000;border:1px solid #000;border-width:1px 2px 1px 1px;overflow:hidden}
.grp span{grid-column:3;background:#9ddbdc;padding-left:1px;white-space:nowrap;overflow:hidden}
.rout span{background:#dcdcdc}
.grp input{appearance:none;width:15px;height:14px;background:#fff;border:2px solid #fff;outline:0;box-shadow:inset 0 0 0 2px #000;margin:0}
.selected{margin-top:3px;height:20px;border:1px solid #000;background:#ffc751;padding:2px 2px}
.canvas{flex:1;min-width:0;background:#f00;overflow:hidden}
.canvas svg{display:block}

/* scrollbars */
.vsb,.hsb{display:flex;background:var(--tr);border:solid 2px;border-color:var(--lo) var(--hi) var(--hi) var(--lo);flex:none}
.vsb{flex-direction:column;width:14px}
.hsb{height:14px}
.vsb svg,.hsb svg{display:block;width:10px;height:10px;flex:none}
.vsb i,.hsb i{flex:1;background:var(--bg);border:2px solid;border-color:var(--hi) var(--lo) var(--lo) var(--hi);margin:1px 0}
.hsb i{margin:0 1px}
.down{transform:rotate(180deg)}.left{transform:rotate(-90deg)}.right{transform:rotate(90deg)}
.vsb.long i{margin-bottom:18px}
.hsb.part i{flex:186}.hsb.part s{flex:135}

/* tool column */
.tools{flex:0 0 165px;display:flex;flex-direction:column;background:#55cdaf;border-left:3px solid #3a6a5c}
.grid{display:grid;grid-template-columns:repeat(4,38px);grid-auto-rows:38px;gap:2px;background:#000;padding:2px 1px 2px 1px;border-right:2px solid #9ddbdc}
.lower{border-top:2px solid #9ddbdc;border-right-color:#4a5a58;--bg:#d4d4d4;--hi:#f4f4f4;--lo:#808080}
.grid button{background:var(--bg);border:3px solid;border-color:var(--hi) var(--lo) var(--lo) var(--hi);padding:1px}
.grid svg{display:block;width:30px;height:30px;fill:none;stroke:#000}
.grid .w2{stroke-width:2}
.grid .k,.grid use{fill:#000;stroke:none}
.grid .r{stroke:#e81818;stroke-width:2}.grid .b{stroke:#00f;stroke-width:2}
.grid .bf{fill:#0000f0;stroke:none}.grid .rf{fill:#f01010;stroke:none}.grid .rd{fill:#f01010}
.grid .hot{box-shadow:inset 0 0 0 2px #e01818}
.grid .wh{background:#fff}
.grid .or{--bg:#ffc751;--hi:#ffe9b8;--lo:#a07a28}
.overview{flex:1;display:grid;grid-template-rows:142px 156px 1fr;background:#000;border:solid;border-width:3px 2px 3px 0;border-color:#2f6658 #a6eedb #a6eedb}
.overview .mid{border:1px solid #2d7665;border-width:1px 0}
.overview svg{display:block}
.coords{height:44px;line-height:15px;padding:7px 1px;border:1px solid #2b7562;border-color:#2b7562 #a6eedb #a6eedb #2b7562}

/* command line */
.command{display:flex;align-items:stretch;background:#ffffcc;border-top:2px solid #000;border-bottom:2px solid #000;font-size:12px;line-height:32px}
.cb{width:32px;border:1px solid #000;border-width:0 2px 0 0;padding:2px;background:#ffffcc;box-shadow:inset 0 0 0 2px #d8d8a8}
.cb:first-child{width:33px;border-left-width:2px}
.cb.lit{width:31px;box-shadow:inset 0 0 0 3px #55cdaf}
.cb svg{display:block;width:22px;height:22px;margin:auto;fill:none;stroke:#000}
.command label{padding-left:3px;white-space:pre;width:47px}
.command input{width:173px;border:3px solid;border-color:#97977a #d0d0a0 #d0d0a0 #97977a;outline:1px solid #000;outline-offset:-1px;padding-left:6px;margin-right:1px}
.command p{flex:1;font-size:12px;padding-left:4px}
.unit{flex:0 0 80px;background:var(--bg);border-left:2px solid #000;padding:2px 3px 3px 5px;display:flex;font-size:15px;line-height:20px}
.strip{border:solid;border-width:2px 2px 2px 2px;border-color:#5c8a88 #d2f6f5 #d8ffff;padding:0}
.strip div{height:100%;background:#b4ffff;border:1px solid #000;box-shadow:inset 0 4px 0 -1px #d8ffff,inset 0 -3px 0 -1px #5d9a99}

/* drop-downs */
.sel{position:relative;display:flex;flex:1;background:var(--bg);border:2px solid;border-color:var(--hi) var(--lo) var(--lo) var(--hi)}
.sel select{appearance:none;flex:1;min-width:0;padding-left:5px;line-height:20px}
.sel::after{content:"";position:absolute;right:5px;top:50%;margin-top:-4px;width:12px;height:8px;border:2px solid;border-color:var(--hi) var(--lo) var(--lo) var(--hi)}

/* taskbar */
.taskbar{display:flex;background:#1b2a30;color:#fff;font:12px/20px "Noto Sans","Noto Sans CJK SC",sans-serif}
.tb{width:51px;display:flex;align-items:center;justify-content:center}
.tb svg{width:20px;height:20px}
.tb.files{width:58px}
.tb:first-child{width:48px}
.app{flex:0 0 152px;margin-right:8px;height:40px;padding-left:8px;display:flex;align-items:center;border-bottom:3px solid #7cb4e8;white-space:nowrap;overflow:hidden}
.app svg{width:22px;height:22px;margin-right:5px;flex:none}
.app.active{flex-basis:160px;background:#49565b}
.tray{margin-left:auto;display:flex;align-items:center;padding-right:24px;gap:8px}
.tray svg{width:16px;height:16px}
.tray .sogou{margin-left:5px}
.tray span{width:14px}
.badge{width:22px;height:22px;border-radius:50%;border:2px solid #14c86a;font-weight:normal;line-height:18px;text-align:center;margin-left:8px}
.clock{text-align:center;width:66px}
.tray .play{margin-left:8px}
.tray .note{margin-left:16px}
.ime{position:absolute;right:0;bottom:40px;height:26px;width:178px;background:#fff;display:flex;align-items:center;gap:8px;padding-left:0;color:#0a6fd0;font:bold 14px/20px "Noto Sans CJK SC",sans-serif}
.ime svg{width:16px;height:16px;flex:none}
.ime .s{width:30px;height:30px}
.ime .mic{background:#ffe4ea}

/* floating windows */
.win{position:absolute;display:flex;flex-direction:column;background:var(--bg);box-shadow:0 0 0 1px #3b5f55,0 4px 14px rgba(0,0,0,.3)}
.win>header{flex:0 0 30px;padding:0 9px 0 8px}
.win>header button{margin-left:auto}
.win button{white-space:nowrap}
.ib{background:var(--bg);border:2px solid;border-color:var(--hi) var(--lo) var(--lo) var(--hi);width:30px;height:30px;display:flex;align-items:center;justify-content:center}
.ib svg{width:23px;height:23px;flex:none}
.undo{width:34px}.undo svg{width:27px}
.hotb{border-color:#e01818}

.hist{left:10px;top:26px;width:467px}
.upper{display:flex;height:292px;padding:4px 4px 1px 4px;border-top:1px solid #000;gap:1px}
.stat{width:103px;background:var(--bg);border:1px solid #000;display:flex;flex-direction:column;justify-content:space-between}
.stat fieldset{border:solid #000;border-width:1px 1px 1px 1px;padding-bottom:1px}
.stat label{display:flex;align-items:center;height:27px;gap:5px;padding-left:5px}
.stat input{appearance:none;width:11px;height:11px;margin:0 1px;transform:rotate(45deg);border:2px solid;border-color:var(--hi) var(--lo) var(--lo) var(--hi)}
.stat input:checked{background:#c8104c;border-color:var(--lo) var(--hi) var(--hi) var(--lo)}
.mini{display:flex;gap:4px;padding:2px 1px}
.chartpane{flex:1;background:var(--bg);border:2px solid #000;border-width:1px 2px;border-color:var(--lo) var(--hi) var(--hi) var(--lo);outline:0;display:flex;flex-direction:column;min-width:0}
.chart{flex:1;border:1px solid #000;border-bottom:0;display:flex;flex-direction:column}
.chart h2{align-self:center;width:196px;height:22px;margin:4px 0 0 0;text-align:center;font-style:italic;line-height:22px;background:#b4ffff;border:1px solid #000;box-shadow:2px 2px 0 #62807f}
.bars{flex:1;display:flex;align-items:flex-end;padding-left:4px;border-bottom:4px solid #000}
.bars div{width:55px;text-align:center;line-height:15px}
.bars i{display:block;background:#ff1a1a;box-shadow:0 0 0 1px #000}
.bars .red{color:#e81414}
.bars .y i,.cells .y{background:#ffff1a}
.cells{display:flex;margin:1px 0 6px 4px}
.cells div{width:55px;height:29px;line-height:15px;padding:3px 0 0 4px;border:1px solid #000;border-left-width:0;background:#ff1a1a;white-space:nowrap}
.cells div:first-child{border-left-width:1px}
.cells .in{padding-left:8px}
.resrow{display:flex;height:62px;border-top:1px solid #000;margin-top:1px}
.resrow ul{width:74px;padding:1px 2px;border:2px solid;border-color:var(--lo) var(--hi) var(--hi) var(--lo);margin:0 3px 0 1px}
.resrow .on{background:#000;color:#9ddbdc}
.res{flex:1;display:flex;flex-direction:column;border:2px solid #000;margin-left:1px;padding:0 3px 2px 2px}
.res label{text-align:center}
.res output{padding-left:12px;line-height:24px}
.res input{appearance:none;width:100%;height:16px;background:var(--tr);border:2px solid;border-color:var(--lo) var(--hi) var(--hi) var(--lo)}
.res input::-webkit-slider-thumb{appearance:none;width:30px;height:12px;background:linear-gradient(90deg,transparent 13px,var(--lo) 13px 14px,var(--hi) 14px 15px,transparent 15px) var(--bg);border:1px solid;border-color:var(--hi) var(--lo) var(--lo) var(--hi)}
.sash{height:8px;display:flex;justify-content:flex-end;padding-right:11px;background:linear-gradient(#55cdaf 3px,#2b7562 3px 4px,#a6eedb 4px 5px,#55cdaf 5px)}
.sash i{width:9px;height:9px;background:#55cdaf;border:2px solid;border-color:var(--hi) var(--lo) var(--lo) var(--hi)}
.map{height:166px;margin:0 5px 0 4px;border:2px solid;border-color:var(--lo) var(--hi) var(--hi) var(--lo);outline:1px solid #000;outline-offset:-3px;display:flex;justify-content:center;padding-top:20px}
.map svg{width:126px;height:122px}
.info{display:flex;align-items:center;height:44px;padding:0 6px;gap:3px}
.info .ib{height:38px;width:30px}
.info .big{width:38px}.info .big svg{width:30px;height:30px}
.info p{flex:1;height:42px;line-height:40px;border:1px solid #000;background:var(--bg);padding-left:3px;white-space:nowrap}
.close{height:28px;margin-top:2px;border:solid 2px;border-color:var(--hi) var(--lo) var(--lo) var(--hi);background:var(--bg);outline:1px solid #000}

.viewer{left:1198px;top:129px;width:495px}
.viewer>header{color:#111}
.check{height:30px;padding:2px;background:#9ddbdc;border:solid #000;border-width:1px 1px 2px 1px}
.check h2{height:100%;text-align:center;font:bold 15px/20px "Liberation Serif",serif;background:var(--bg);border:2px solid;border-color:var(--hi) var(--lo) var(--lo) var(--hi)}
.panes{display:flex;height:542px;border:1px solid #000;border-width:0 1px 2px 1px}
.lcol{width:171px;display:flex;flex-direction:column;border-right:3px solid #000}
.lhead{display:flex;height:29px;border-bottom:1px solid #000;font-style:italic;gap:2px;background:#000}
.lhead button{border:2px solid;border-color:var(--hi) var(--lo) var(--lo) var(--hi);background:var(--bg);font-weight:normal;outline:2px solid #55cdaf;outline-offset:-1px;width:47px;margin:3px 1px 1px;flex:none}
.lhead button:last-child{width:38px}
.lhead b{flex:1;background:var(--bg);text-align:center;line-height:31px}
.lists{flex:1;display:flex;min-height:0;justify-content:space-between}
.lists ul{border:2px solid;border-color:var(--lo) var(--hi) var(--hi) var(--lo);padding:4px 2px;flex:1;margin-right:5px;white-space:nowrap;min-width:0}
.lists li{height:18px;line-height:18px}
.lists .on{height:16px;line-height:16px;margin:1px 0;background:#000;color:#55cdaf}
.lcol ul{padding:2px 3px}
.hsb{margin:5px 19px 3px 0}
.hist .hsb{margin:0 0 1px}
.keep{display:flex;height:32px;border-top:1px solid #000;padding:1px 1px 1px 5px;border-bottom:1px solid #000;flex:none}
.keep select{padding-left:18px}
.keep .sel::after,.pan .sel::after{right:6px}
.rcol{flex:1;min-width:0;display:flex;flex-direction:column}
.rhead{display:flex;height:30px;background:var(--bg);align-items:stretch;line-height:32px}
.rhead>button{width:205px;border:2px solid;border-color:var(--hi) var(--lo) var(--lo) var(--hi);background:var(--bg);font-style:italic;outline:2px solid #55cdaf;outline-offset:-1px;margin:2px 2px 1px 1px}
.rhead label{width:51px}
.rhead .sel{margin:2px 1px 1px 0}
.rhead select{padding-left:4px}
.navrow{display:flex;height:27px;align-items:center;gap:4px;flex:none;padding-right:1px}
.navrow button{height:23px;width:44px;text-align:center;background:var(--bg);border:2px solid;border-color:var(--hi) var(--lo) var(--lo) var(--hi);display:flex;justify-content:center;align-items:center}
.navrow .def{width:56px;height:26px;border-color:#000;box-shadow:inset 1px 1px 0 var(--hi),inset -2px -2px 0 var(--lo);margin-right:-1px}
.navrow input{flex:1;min-width:0;height:24px;border:2px solid;border-color:#2b7562 #a6eedb #a6eedb #2b7562;padding-left:6px}
.panrow{display:flex;height:33px;flex:none}
.pan{display:flex;width:221px;border:1px solid #000;background:var(--bg);line-height:30px}
.pan .sel{margin:2px 1px 2px 5px;flex:0 0 116px}
.pan select{padding-left:8px}
.pan label{border-left:1px solid #000;padding-left:1px;width:28px}
.pan .green{--bg:#18e818;--hi:#90f890;--lo:#2b9050;flex:1;border:2px solid;outline:3px solid #18e818;margin:3px 2px 3px 5px;border-color:var(--hi) var(--lo) var(--lo) var(--hi)}
.show{display:flex;gap:4px;align-items:center;padding:0 0 5px 4px}
.show input{appearance:none;width:13px;height:13px;border:1px solid;border-color:#a6eedb #2b7562 #2b7562 #a6eedb}
.rcol .mini{justify-content:flex-end;height:34px;padding:2px 2px 1px;flex:none}
.meas{height:22px;line-height:20px;text-align:center;white-space:pre;border:solid #000;border-width:0 1px 2px}
.erf{height:20px;line-height:19px;background:#ffffcc;padding-left:2px;border:1px solid #000;border-top:0}
.foot{display:flex;gap:4px;background:var(--bg);height:33px;padding:1px 2px 1px;align-items:center}
.cl{flex:1;height:30px;border:2px solid;border-color:var(--hi) var(--lo) var(--lo) var(--hi)}
```
